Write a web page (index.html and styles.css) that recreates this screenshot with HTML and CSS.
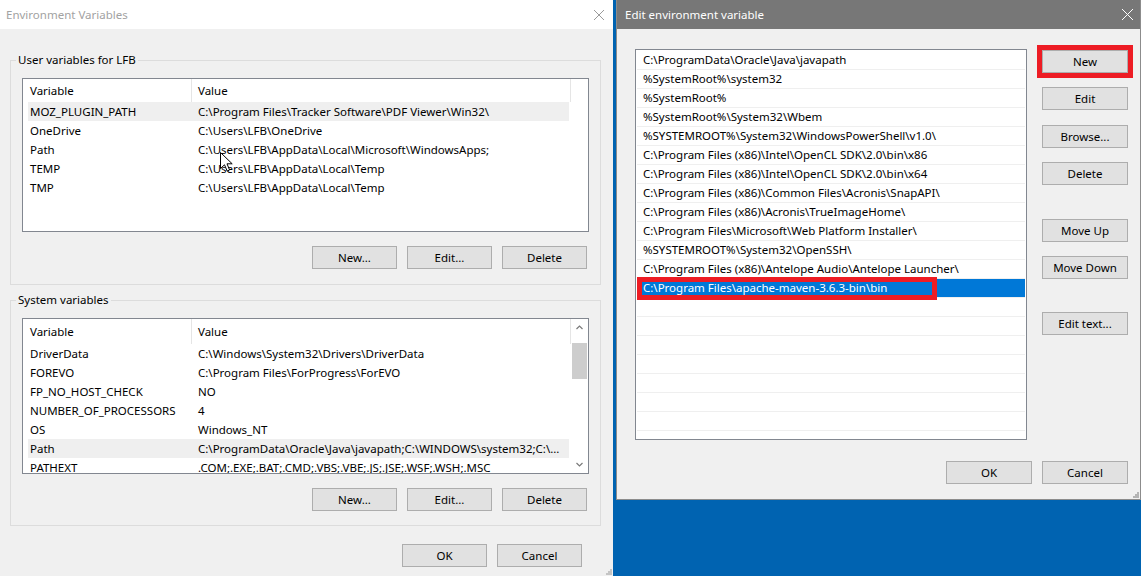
FILE: index.html
```html
<!DOCTYPE html>
<html lang="en">
<head>
    <meta charset="UTF-8">
    <title>Environment Variables</title>
    <link rel="stylesheet" href="styles.css">
</head>
<body>
<div class="desktop">

    <!-- Environment Variables (inactive) -->
    <div class="window env-window">
        <div class="titlebar">
            <span>Environment Variables</span>
            <svg class="close" width="10" height="10" viewBox="0 0 10 10"><path d="M0 0L10 10M10 0L0 10" stroke="#9a9a9a" stroke-width="1"/></svg>
        </div>
        <div class="env-body">
            <div class="group">
                <span class="group-label">User variables for LFB</span>
                <div class="listview user-list">
                    <div class="lv-main">
                        <div class="lv-header"><span class="h-var">Variable</span><span class="h-val">Value</span></div>
                        <div class="lv-row hot"><span class="c-var">MOZ_PLUGIN_PATH</span><span class="c-val">C:\Program Files\Tracker Software\PDF Viewer\Win32\</span></div>
                        <div class="lv-row"><span class="c-var">OneDrive</span><span class="c-val">C:\Users\LFB\OneDrive</span></div>
                        <div class="lv-row"><span class="c-var">Path</span><span class="c-val">C:\Users\LFB\AppData\Local\Microsoft\WindowsApps;</span></div>
                        <div class="lv-row"><span class="c-var">TEMP</span><span class="c-val">C:\Users\LFB\AppData\Local\Temp</span></div>
                        <div class="lv-row"><span class="c-var">TMP</span><span class="c-val">C:\Users\LFB\AppData\Local\Temp</span></div>
                    </div>
                </div>
                <div class="btn-row">
                    <button class="btn">New...</button>
                    <button class="btn">Edit...</button>
                    <button class="btn">Delete</button>
                </div>
            </div>

            <div class="group">
                <span class="group-label">System variables</span>
                <div class="listview sys-list">
                    <div class="lv-main">
                        <div class="lv-header"><span class="h-var">Variable</span><span class="h-val">Value</span></div>
                        <div class="lv-row"><span class="c-var">DriverData</span><span class="c-val">C:\Windows\System32\Drivers\DriverData</span></div>
                        <div class="lv-row"><span class="c-var">FOREVO</span><span class="c-val">C:\Program Files\ForProgress\ForEVO</span></div>
                        <div class="lv-row"><span class="c-var">FP_NO_HOST_CHECK</span><span class="c-val">NO</span></div>
                        <div class="lv-row"><span class="c-var">NUMBER_OF_PROCESSORS</span><span class="c-val">4</span></div>
                        <div class="lv-row"><span class="c-var">OS</span><span class="c-val">Windows_NT</span></div>
                        <div class="lv-row hot"><span class="c-var">Path</span><span class="c-val">C:\ProgramData\Oracle\Java\javapath;C:\WINDOWS\system32;C:\...</span></div>
                        <div class="lv-row"><span class="c-var">PATHEXT</span><span class="c-val">.COM;.EXE;.BAT;.CMD;.VBS;.VBE;.JS;.JSE;.WSF;.WSH;.MSC</span></div>
                    </div>
                    <div class="scrollbar">
                        <div class="sb-arrow"><svg width="7" height="5" viewBox="0 0 7 5"><path d="M0.5 4L3.5 1L6.5 4" fill="none" stroke="#7a7a7a" stroke-width="1.2"/></svg></div>
                        <div class="sb-thumb"></div>
                        <div class="sb-track"></div>
                        <div class="sb-arrow"><svg width="7" height="5" viewBox="0 0 7 5"><path d="M0.5 1L3.5 4L6.5 1" fill="none" stroke="#7a7a7a" stroke-width="1.2"/></svg></div>
                    </div>
                </div>
                <div class="btn-row">
                    <button class="btn">New...</button>
                    <button class="btn">Edit...</button>
                    <button class="btn">Delete</button>
                </div>
            </div>

            <div class="dialog-footer">
                <button class="btn">OK</button>
                <button class="btn">Cancel</button>
            </div>
        </div>

        <!-- mouse pointer -->
        <svg class="cursor" width="13" height="20" viewBox="0 0 13 20"><path d="M0.5 0.5V16.5L4.5 12.8L7.2 19L9.6 18L7 11.8H12.2Z" fill="#fff" stroke="#000" stroke-width="1"/></svg>
        <svg class="grip" width="7" height="7" viewBox="0 0 7 7" fill="#c4c4c4"><rect x="5" y="1" width="2" height="2"/><rect x="3" y="3" width="2" height="2"/><rect x="5" y="3" width="2" height="2"/><rect x="1" y="5" width="2" height="2"/><rect x="3" y="5" width="2" height="2"/><rect x="5" y="5" width="2" height="2"/></svg>
    </div>

    <!-- Edit environment variable (active) -->
    <div class="window edit-window">
        <div class="titlebar">
            <span>Edit environment variable</span>
            <svg class="close" width="11" height="11" viewBox="0 0 11 11"><path d="M0 0L11 11M11 0L0 11" stroke="#fff" stroke-width="1"/></svg>
        </div>
        <div class="edit-body">
            <div class="edit-main">
                <div class="path-list">
                    <div class="path-row">C:\ProgramData\Oracle\Java\javapath</div>
                    <div class="path-row">%SystemRoot%\system32</div>
                    <div class="path-row">%SystemRoot%</div>
                    <div class="path-row">%SystemRoot%\System32\Wbem</div>
                    <div class="path-row">%SYSTEMROOT%\System32\WindowsPowerShell\v1.0\</div>
                    <div class="path-row">C:\Program Files (x86)\Intel\OpenCL SDK\2.0\bin\x86</div>
                    <div class="path-row">C:\Program Files (x86)\Intel\OpenCL SDK\2.0\bin\x64</div>
                    <div class="path-row">C:\Program Files (x86)\Common Files\Acronis\SnapAPI\</div>
                    <div class="path-row">C:\Program Files (x86)\Acronis\TrueImageHome\</div>
                    <div class="path-row">C:\Program Files\Microsoft\Web Platform Installer\</div>
                    <div class="path-row">%SYSTEMROOT%\System32\OpenSSH\</div>
                    <div class="path-row">C:\Program Files (x86)\Antelope Audio\Antelope Launcher\</div>
                    <div class="path-row selected">C:\Program Files\apache-maven-3.6.3-bin\bin</div>
                    <div class="path-row"></div>
                    <div class="path-row"></div>
                    <div class="path-row"></div>
                    <div class="path-row"></div>
                    <div class="path-row"></div>
                    <div class="path-row"></div>
                    <div class="path-row"></div>
                    <div class="path-row"></div>
                    <div class="mark"></div>
                </div>
                <div class="side-buttons">
                    <button class="btn marked">New</button>
                    <button class="btn">Edit</button>
                    <button class="btn gap-15">Browse...</button>
                    <button class="btn">Delete</button>
                    <button class="btn gap-34">Move Up</button>
                    <button class="btn">Move Down</button>
                    <button class="btn gap-33">Edit text...</button>
                </div>
            </div>
            <div class="edit-footer">
                <button class="btn">OK</button>
                <button class="btn">Cancel</button>
            </div>
        </div>
        <svg class="grip" width="7" height="7" viewBox="0 0 7 7" fill="#b4b4b4"><rect x="5" y="1" width="2" height="2"/><rect x="3" y="3" width="2" height="2"/><rect x="5" y="3" width="2" height="2"/><rect x="1" y="5" width="2" height="2"/><rect x="3" y="5" width="2" height="2"/><rect x="5" y="5" width="2" height="2"/></svg>
    </div>

</div>
</body>
</html>
```

FILE: styles.css
```css
body {
    margin: 0;
    font-family: "Noto Sans", "Liberation Sans", sans-serif;
    font-size: 11.5px;
    color: #000;
    overflow: hidden;
}

.desktop {
    display: flex;
    align-items: flex-start;
    width: 1141px;
    height: 576px;
    background-color: #0063b1;
}

.window {
    position: relative;
    background-color: #f0f0f0;
    box-sizing: border-box;
    flex-shrink: 0;
}

.titlebar {
    height: 29px;
    display: flex;
    align-items: center;
    justify-content: space-between;
    font-size: 11.5px;
}

.btn {
    height: 23px;
    width: 85px;
    padding: 0;
    border: 1px solid #adadad;
    background-color: #e1e1e1;
    font: inherit;
    color: #000;
}

/* Environment Variables window */
.env-window {
    width: 613px;
    height: 576px;
}

.env-window .titlebar {
    background-color: #fff;
    color: #a2a2a2;
    padding: 0 9px 0 6px;
}

.env-body {
    padding: 31px 12px 0 10px;
}

.group {
    position: relative;
    border: 1px solid #dcdcdc;
    padding: 17px 11px 15px;
}

.group + .group {
    margin-top: 15px;
    padding-bottom: 14px;
}

.group-label {
    position: absolute;
    top: -9px;
    left: 5px;
    padding: 0 2px;
    line-height: 16px;
    background-color: #f0f0f0;
}

.listview {
    display: flex;
    border: 1px solid #828790;
    background-color: #fff;
    box-sizing: border-box;
    overflow: hidden;
}

.user-list {
    height: 154px;
}

.sys-list {
    height: 156px;
}

.lv-main {
    flex: 1;
    overflow: hidden;
}

.lv-header {
    display: flex;
    height: 23px;
    line-height: 23px;
}

.sys-list .lv-header {
    height: 25px;
    line-height: 25px;
}

.h-var, .h-val {
    box-sizing: border-box;
    border-right: 1px solid #e5e5e5;
}

.h-var {
    width: 169px;
    padding-left: 7px;
}

.h-val {
    width: 379px;
    padding-left: 6px;
}

.lv-row {
    display: flex;
    width: 541px;
    height: 19px;
    line-height: 19px;
    margin-left: 5px;
    white-space: nowrap;
}

.lv-row.hot {
    background-color: #efefef;
}

.c-var {
    width: 168px;
    padding-left: 2px;
    box-sizing: border-box;
}

.c-val {
    flex: 1;
    padding-left: 2px;
    overflow: hidden;
}

.scrollbar {
    width: 17px;
    display: flex;
    flex-direction: column;
    align-items: center;
    background-color: #fff;
}

.sb-arrow {
    height: 17px;
    display: flex;
    align-items: center;
    justify-content: center;
}

.sb-thumb {
    width: 15px;
    height: 36px;
    margin-top: 7px;
    background-color: #cdcdcd;
}

.sb-track {
    flex: 1;
}

.btn-row {
    display: flex;
    justify-content: flex-end;
    gap: 10px;
    margin-top: 14px;
    padding-right: 2px;
}

.dialog-footer {
    display: flex;
    justify-content: flex-end;
    gap: 10px;
    margin-top: 18px;
    padding-right: 19px;
}

.cursor {
    position: absolute;
    left: 220px;
    top: 152px;
}

.grip {
    position: absolute;
    right: 1px;
    bottom: 1px;
}

/* Edit environment variable window */
.edit-window {
    width: 525px;
    height: 500px;
    margin-left: 3px;
    border: 1px solid #8c8c8c;
    border-top: 0;
}

.edit-window .titlebar {
    background-color: #777;
    color: #fff;
    padding: 0 7px 0 8px;
}

.edit-body {
    padding: 20px 12px 0 18px;
}

.edit-main {
    display: flex;
}

.path-list {
    position: relative;
    width: 392px;
    height: 391px;
    padding: 1px 1px 0;
    border: 1px solid #828790;
    background-color: #fff;
    box-sizing: border-box;
    overflow: hidden;
}

.path-row {
    height: 19px;
    line-height: 18px;
    padding-left: 6px;
    border-bottom: 1px solid #efefef;
    box-sizing: border-box;
    white-space: nowrap;
}

.path-row.selected {
    background-color: #0078d7;
    color: #fff;
}

.mark {
    position: absolute;
    left: 1px;
    top: 227px;
    width: 300px;
    height: 23px;
    border: 5px solid #ed1c24;
    box-sizing: border-box;
}

.side-buttons {
    display: flex;
    flex-direction: column;
    margin-left: 15px;
    padding-top: 1px;
}

.side-buttons .btn {
    width: 86px;
    margin-top: 14px;
}

.side-buttons .btn.marked {
    margin-top: 0;
    outline: 5px solid #ed1c24;
}

.side-buttons .gap-15 {
    margin-top: 15px;
}

.side-buttons .gap-34 {
    margin-top: 34px;
}

.side-buttons .gap-33 {
    margin-top: 33px;
}

.edit-footer {
    display: flex;
    justify-content: flex-end;
    gap: 10px;
    margin-top: 21px;
}

.edit-footer .btn {
    width: 86px;
}
```
